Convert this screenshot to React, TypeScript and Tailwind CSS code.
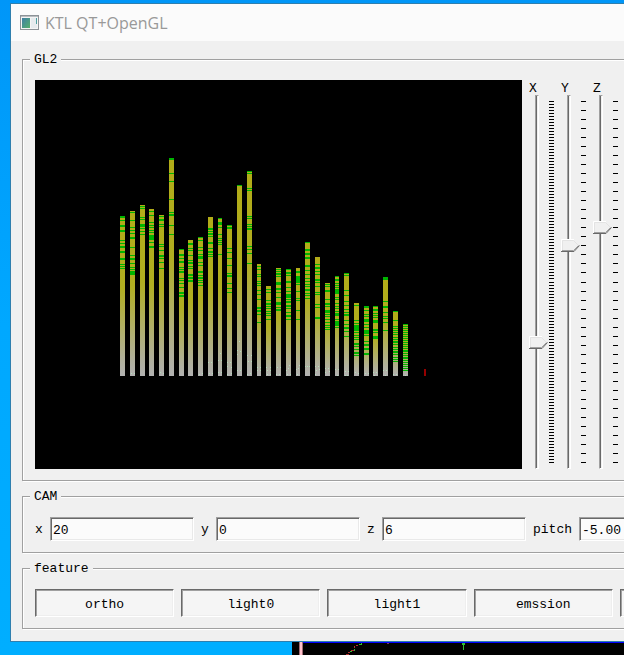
import { useId, useState } from "react";

type Bar = { x: number; w: number; top: number; marks: string };

// marks: top edge of each green band, "y" for one pixel or "y+h" for taller bands
const BARS: Bar[] = [
  { x: 120, w: 5, top: 216, marks: "216+2 220 225+2 230+2 240 243 246+2 251+2 258+2 264 266 268" },
  { x: 130, w: 5, top: 211, marks: "212 220 227 230 233 237+2 247 255 258+2 263 267 269 271+4" },
  { x: 140, w: 5, top: 205, marks: "206 208 217 219 224+3 228 231 234" },
  { x: 149, w: 5, top: 209, marks: "211 215 222 225 227 230 232 235+5 242 246+2" },
  { x: 159, w: 5, top: 215, marks: "216 219+2 224 226 244 246 250 255+2 258 262 268" },
  { x: 169, w: 5, top: 158, marks: "158+2 173 181 199 212 214+2 225 234" },
  { x: 179, w: 5, top: 249, marks: "249 254+2 258 261+2 267 269 271+2 278 280 283 287 292+2 295+2" },
  { x: 188, w: 5, top: 240, marks: "243+2 248 250 255 260 262+2 266 268 274+2 277+2 280+2" },
  { x: 198, w: 5, top: 237, marks: "237 240 247 250 254 256+3 262 265 271+2 275 277+2 280 282 285" },
  { x: 208, w: 5, top: 217, marks: "228+2 231 233+2 236 242+2 248 251+2 254 256" },
  { x: 218, w: 4, top: 218, marks: "218 222+3 227 234 238 240 242 244 254" },
  { x: 227, w: 5, top: 225, marks: "225 227+2 248 252 258 265 273 275+2 283 288 292" },
  { x: 237, w: 5, top: 185, marks: "185" },
  { x: 247, w: 5, top: 171, marks: "171 173 188 190 216 218 224 226 228+2 246 249 253 263" },
  { x: 257, w: 4, top: 264, marks: "266 269 274 276 281 283 285 290 294 299 307+2 310+2 314 322" },
  { x: 266, w: 5, top: 286, marks: "289 292 300 303+2 306 308 311 313 315 319" },
  { x: 276, w: 5, top: 268, marks: "269 271 273+2 276 282+3 288+2 292 297 302+3 307 309+2" },
  { x: 286, w: 5, top: 269, marks: "269 272+2 275 281+2 287 291 294+4 299 301+2 305+2 308 312 315+2 319" },
  { x: 296, w: 4, top: 268, marks: "271+2 276+7 284 291 298 300 310 319" },
  { x: 305, w: 5, top: 242, marks: "242 249+2 253+2 257+2 265+2 270 274 278 281 284 286 289+2 293 295 298" },
  { x: 315, w: 5, top: 257, marks: "264 267+2 271 274 279+2 282 286 292 294 304 307 317+2" },
  { x: 325, w: 5, top: 283, marks: "284 286 290+2 299 303+2 306 310+3 314 316 319 322 325 327 329" },
  { x: 335, w: 4, top: 276, marks: "276 279+2 283 285 287 289+5 297 299 303 306 308 311 313+3 319 321+5 327" },
  { x: 344, w: 5, top: 273, marks: "273 275 290 295 301 305 309 312 314+2 320 324 327+2 331 336" },
  { x: 354, w: 5, top: 303, marks: "305 320 323 325+2 327+4 332 335 337 339 343+2 346 349 352+2 355" },
  { x: 364, w: 5, top: 306, marks: "306+2 310 314 316 319+3 324 327 330+4 335 341 344+2 348+2 353+2" },
  { x: 373, w: 5, top: 306, marks: "306 309+2 313 315 317 320+3 329+2 332 336+3" },
  { x: 383, w: 5, top: 277, marks: "277+3 301 306+2 312 316 318 322 330" },
  { x: 393, w: 5, top: 311, marks: "311 320 326 328 330 332 334 337 339 341+2 344 347 349 351+2 354 357 359 361" },
  { x: 403, w: 5, top: 324, marks: "324 326 328 330 332 334 336 338 340 342 344 346 348 350+2 353 355 357+2 360 362 364 366 368 370" },
];

const SPARKS: [number, number][] = [
  [131, 373], [134, 373], [160, 372], [163, 373], [199, 374], [202, 373], [208, 362], [211, 362],
  [209, 373], [212, 373], [218, 360], [221, 360], [220, 353], [218, 372], [221, 372], [227, 362],
  [230, 362], [227, 366], [231, 367], [227, 374], [231, 373], [239, 341], [237, 350], [240, 351],
  [237, 354], [237, 370], [240, 370], [247, 355], [251, 355], [248, 361], [251, 361], [247, 374],
  [250, 373], [257, 367], [260, 367], [257, 370], [260, 370], [266, 367], [270, 367], [267, 370],
  [270, 370], [267, 374], [270, 374], [277, 367], [280, 367], [276, 374], [279, 374], [289, 365],
  [286, 370], [288, 368], [287, 374], [290, 374], [299, 365], [296, 369], [298, 368], [297, 374],
  [305, 366], [307, 366], [309, 366], [315, 366], [318, 366], [316, 370], [319, 369], [315, 374],
  [325, 368], [328, 368], [325, 372], [329, 371], [335, 369], [338, 369], [337, 375], [345, 371],
  [348, 371], [345, 375], [347, 375], [355, 372], [358, 373], [365, 373], [368, 373], [373, 372],
  [376, 372], [374, 375], [383, 370], [386, 370], [385, 375], [393, 374], [396, 374], [405, 375],
];

function Spectrum() {
  return (
    <svg
      className="block h-[389px] w-[487px] shrink-0 bg-black"
      viewBox="35 80 487 389"
      shapeRendering="crispEdges"
      role="img"
      aria-label="Spectrum"
    >
      <defs>
        <linearGradient id="bar" x1="0" y1="1" x2="0" y2="0">
          <stop offset="0" stopColor="#b2b2b2" />
          <stop offset="0.1" stopColor="#b0b09c" />
          <stop offset="0.55" stopColor="#b0ae20" />
          <stop offset="1" stopColor="#b2ac18" />
        </linearGradient>
      </defs>
      {BARS.map((bar) => (
        <g key={bar.x}>
          <rect x={bar.x} y={bar.top} width={bar.w} height={376 - bar.top} fill="url(#bar)" />
          {bar.marks.split(" ").map((mark) => {
            const [y, h = 1] = mark.split("+").map(Number);
            return <rect key={mark} x={bar.x} y={y} width={bar.w} height={h} fill="#00b400" />;
          })}
        </g>
      ))}
      {SPARKS.map(([x, y]) => (
        <rect key={`${x}-${y}`} x={x} y={y} width="1" height="1" fill="#b4dcbc" />
      ))}
      <rect x="424" y="369" width="2" height="7" fill="#960000" />
    </svg>
  );
}

function AxisSlider({ label, steps, start }: { label: string; steps: number; start: number }) {
  const id = useId();
  const [value, setValue] = useState(start);
  return (
    <div className="flex w-8 shrink-0 flex-col">
      <label htmlFor={id} className="block h-[15px] pl-px leading-[18px]">
        {label}
      </label>
      <div className="relative flex grow">
        <div className="ml-[7px] w-1 border border-r-white border-b-white border-l-[#a0a0a0] border-t-[#a0a0a0] bg-[#f0f0f0] shadow-[inset_1px_0_#696969]" />
        <svg
          className="ml-2.5 w-[5px]"
          viewBox="0 0 5 374"
          shapeRendering="crispEdges"
          aria-hidden="true"
        >
          {Array.from({ length: steps + 1 }, (_, i) => (
            <rect key={i} y={6 + Math.round((i * 361) / steps)} width="5" height="1" fill="#000" />
          ))}
        </svg>
        <svg
          className="pointer-events-none absolute left-px h-[13px] w-[19px]"
          style={{ top: 361 - value }}
          viewBox="0 0 19 13"
          aria-hidden="true"
        >
          <path d="M0 0H13L19 6.5L13 13H0Z" fill="#f0f0f0" />
          <path d="M.5 12V.5H13" fill="none" stroke="#fff" />
          <path d="M1.5 11V1.5H12.5L17.5 6.5" fill="none" stroke="#e3e3e3" />
          <path d="M1 11.5H12.5L17.5 6.5" fill="none" stroke="#a0a0a0" />
          <path d="M0 12.5H13L18.5 6.5" fill="none" stroke="#696969" />
        </svg>
        <input
          id={id}
          type="range"
          min={0}
          max={361}
          value={value}
          onChange={(e) => setValue(Number(e.target.value))}
          className="absolute inset-y-0 left-0 m-0 w-5 opacity-0 [direction:rtl] [writing-mode:vertical-lr]"
        />
      </div>
    </div>
  );
}

function Group({ title, children }: { title: string; children: React.ReactNode }) {
  return (
    <fieldset className="min-w-0 border border-[#a0a0a0] px-3 pb-[11px] shadow-[inset_1px_1px_#fff,1px_1px_#fff]">
      <legend className="ml-[-5px] h-4 bg-[#f0f0f0] px-1 leading-[18px]">{title}</legend>
      <div className="flex gap-[7px] pt-[13px]">{children}</div>
    </fieldset>
  );
}

function Field({ label, value }: { label: string; value: string }) {
  const id = useId();
  return (
    <>
      <label htmlFor={id} className="h-6 min-w-2 shrink-0 leading-[26px]">
        {label}
      </label>
      <input
        id={id}
        type="text"
        defaultValue={value}
        className="h-6 w-36 shrink-0 border border-b-white border-l-[#a0a0a0] border-r-white border-t-[#a0a0a0] bg-[#fbfbfb] px-0.5 pt-0.5 shadow-[inset_1px_1px_#696969,inset_-1px_-1px_#e9e9e9] outline-none"
      />
    </>
  );
}

function Toggle({ label }: { label: string }) {
  const [on, setOn] = useState(true);
  return (
    <button
      type="button"
      aria-pressed={on}
      aria-label={label || "next feature"}
      onClick={() => setOn(!on)}
      className="h-7 flex-1 border border-b-white border-l-[#696969] border-r-white border-t-[#696969] bg-[#f5f5f5] pt-1 leading-5 shadow-[inset_1px_1px_#a0a0a0,inset_-1px_-1px_#eeeeee] aria-[pressed=false]:bg-[#f0f0f0]"
    >
      {label}
    </button>
  );
}

export default function App() {
  return (
    <div className="flex min-h-screen flex-col overflow-hidden bg-linear-to-b from-[#0096f8] via-[#00a8ff] to-[#00aeff] pl-2.5 pt-[3px] font-['Liberation_Mono','Noto_Sans_CJK_SC',monospace] text-[13px] text-black">
      <main className="min-w-[774px] border border-[#2f7fae] bg-[#f0f0f0]">
        <header className="flex h-[37px] items-center gap-1.5 bg-[#fbfbfb] pl-[9px]">
          <svg className="h-[15px] w-[19px]" viewBox="0 0 19 15" aria-hidden="true">
            <defs>
              <linearGradient id="pane" x1="0" y1="0" x2="1" y2="1">
                <stop offset="0" stopColor="#3f7fa6" />
                <stop offset="1" stopColor="#55b06c" />
              </linearGradient>
            </defs>
            <rect x=".5" y=".5" width="18" height="14" fill="#f4f4f4" stroke="#8d9398" />
            <path d="M1 1.5H18" stroke="#b9bdc0" />
            <rect x="2" y="3" width="8" height="10" fill="url(#pane)" />
            <rect x="11" y="3" width="6" height="10" fill="#e6ebee" />
            <path d="M16.5 3V9" stroke="#4f9fa0" />
          </svg>
          <h1 className="font-['Open_Sans','Noto_Sans',sans-serif] text-base leading-5 text-[#999999]">
            KTL QT+OpenGL
          </h1>
        </header>
        <div className="flex flex-col gap-[7px] px-[11px] pb-3 pt-2.5">
          <Group title="GL2">
            <Spectrum />
            <div className="-ml-px flex">
              <AxisSlider label="X" steps={120} start={120} />
              <AxisSlider label="Y" steps={40} start={217} />
              <AxisSlider label="Z" steps={40} start={235} />
            </div>
          </Group>
          <Group title="CAM">
            <Field label="x" value="20" />
            <Field label="y" value="0" />
            <Field label="z" value="6" />
            <Field label="pitch" value="-5.00" />
          </Group>
          <Group title="feature">
            <Toggle label="ortho" />
            <Toggle label="light0" />
            <Toggle label="light1" />
            <Toggle label="emssion" />
            <Toggle label="" />
          </Group>
        </div>
      </main>
      <div className="ml-[282px] flex grow bg-black">
        <svg
          className="h-[13px] w-[332px] shrink-0"
          viewBox="0 0 332 13"
          shapeRendering="crispEdges"
          aria-hidden="true"
        >
          <rect x="7" width="4" height="13" fill="#a06c74" />
          <rect x="8" width="2" height="13" fill="#ffc0cb" />
          <rect x="11" width="321" height="1" fill="#0000ff" />
          <path
            d="M54 12.5H56V11.5M56 10.5H58M59 8.5H62V7M62.5 6V4M64 3.5H66"
            fill="none"
            stroke="#b03030"
          />
          <path d="M58 9.5H60M62.5 9V7M67 2.5H69L70 1.5" fill="none" stroke="#30c030" />
          <rect x="95" y="1" width="2" height="1" fill="#803060" />
          <rect x="170" y="1" width="3" height="2" fill="#30c030" />
          <rect x="171" y="3" width="1" height="5" fill="#30c030" />
        </svg>
      </div>
    </div>
  );
}
